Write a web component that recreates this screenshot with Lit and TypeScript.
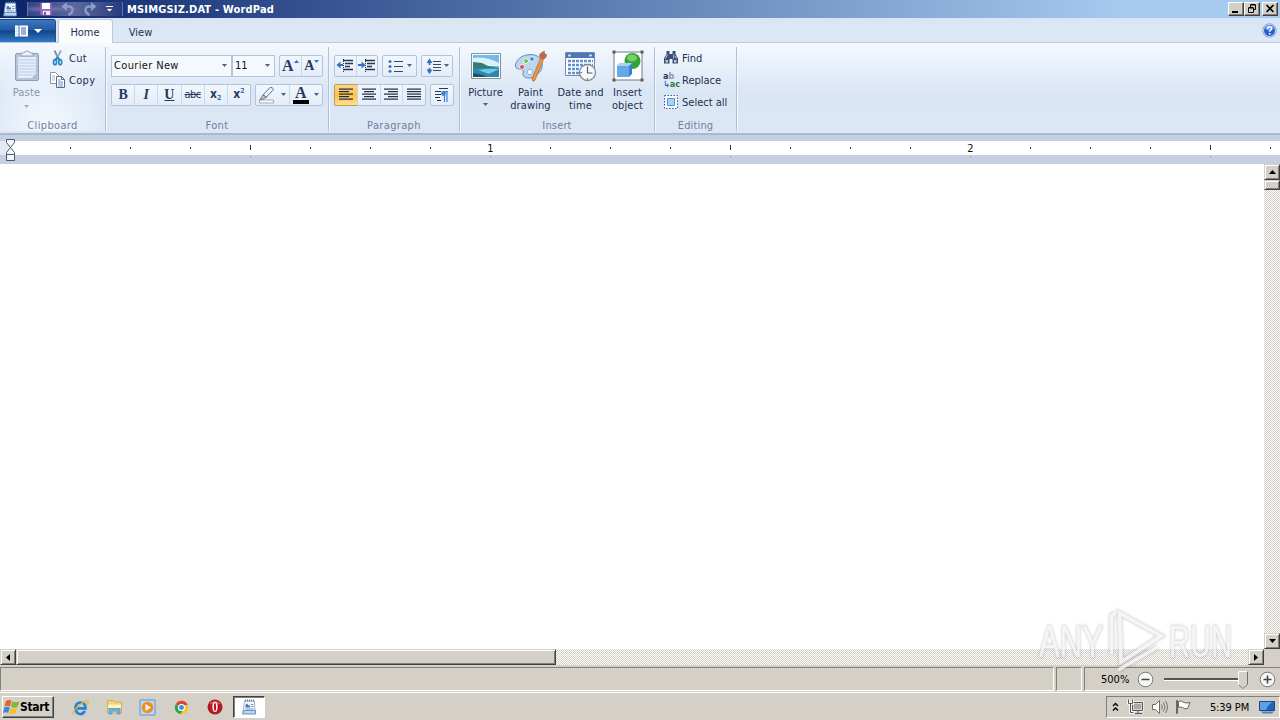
import { LitElement, html, svg, css, nothing } from 'lit'
import type { TemplateResult } from 'lit'
import { customElement, property } from 'lit/decorators.js'
import { map } from 'lit/directives/map.js'
import { classMap } from 'lit/directives/class-map.js'

const appIcon = html`
  <svg width="16" height="16" viewBox="0 0 16 16">
    <path d="M3.500 2h10l.5 11.500H2z" fill="#f2f7fd" stroke="#86a5c9" stroke-width=".8"/>
    <path d="M2.500 11.500h12v3.500H1.500z" fill="#b9d5f1" stroke="#4f7bb0" stroke-width=".8"/>
    <path d="M4.500 .5v2M6.500 .5v2M8.500 .5v2M10.500 .5v2M12.500 .5v2" stroke="#4d6f9c" stroke-width=".9"/>
    <path d="M4.500 8.500V6l1.500-1.500L8 7l1-1.500V8.500z" fill="#3f78bd"/>
    <path d="M10 5.500h2.500M10 7.500h2.500M4.500 10h8" stroke="#6a8db5" stroke-width=".9"/>
  </svg>`

const icons: Record<string, TemplateResult> = {
  save: html`
    <svg width="14" height="14" viewBox="0 0 14 14">
      <path d="M1 1h12v12H2l-1-1z" fill="#9b6fc0" stroke="#6f4fa4"/>
      <path d="M3 1h8v6H3z" fill="#fff"/>
      <path d="M4 9h7v4H4z" fill="#f0e4fa"/>
      <path d="M5 10h2v3H5z" fill="#76549f"/>
    </svg>`,
  undo: html`
    <svg width="14" height="14" viewBox="0 0 14 14">
      <path d="M4 4.500h4q4 .5 3.500 4-.5 3-4 4.500" fill="none" stroke="#8c9ccb" stroke-width="2.400"/>
      <path d="M6 0v9L0.500 4.500z" fill="#8c9ccb"/>
    </svg>`,
  redo: html`
    <svg width="14" height="14" viewBox="0 0 14 14">
      <path d="M10 4.500H6q-4 .5-3.500 4 .5 3 4 4.500" fill="none" stroke="#8c9ccb" stroke-width="2.400"/>
      <path d="M8 0v9l5.500-4.500z" fill="#8c9ccb"/>
    </svg>`,
  menu: html`
    <svg width="28" height="14" viewBox="0 0 28 14">
      <path d="M1 1.500h13v11H1z" fill="#fff"/>
      <path d="M5 1.500v11" stroke="#2f66ae"/>
      <path d="M7 4h5M7 6h5M7 8h5M7 10h5" stroke="#2f66ae"/>
      <path d="M1.500 4h2M1.500 7h2M1.500 10h2" stroke="#a6c0e0"/>
      <path d="M20 5h8l-4 4z" fill="#fff"/>
    </svg>`,
  help: html`
    <svg width="15" height="15" viewBox="0 0 15 15">
      <circle cx="7.500" cy="7.500" r="6.700" fill="#e6eefb" stroke="#6e93d6" stroke-width=".9"/>
      <circle cx="7.500" cy="7.500" r="5.500" fill="#2a5fce"/>
      <ellipse cx="7.500" cy="4.800" rx="4.200" ry="2.600" fill="#6c9bee"/>
      <path d="M5.500 5.900q0-2.200 2.100-2.200t2 1.900q0 1.200-1.300 1.800-.7.500-.7 1.400" fill="none" stroke="#fff" stroke-width="1.500"/>
      <path d="M6.900 10h1.600v1.600H6.900z" fill="#fff"/>
    </svg>`,
  paste: html`
    <svg width="26" height="32" viewBox="0 0 26 32">
      <rect x="1.500" y="3.500" width="23" height="27" rx="1.500" fill="#b5c3dc" stroke="#8c9cbd"/>
      <path d="M4 7h18v21H4z" fill="#e6eef9"/>
      <path d="M4 10h18M4 13h18M4 16h18M4 19h18M4 22h18M4 25h18" stroke="#bccbe3"/>
      <path d="M7 6V3h3q.5-2 3-2t3 2h3v3z" fill="#edf1f8" stroke="#95a3bf"/>
      <path d="M18 28l4-4v4z" fill="#a3b5d2"/>
    </svg>`,
  cut: html`
    <svg width="14" height="16" viewBox="0 0 14 16">
      <path d="M3.500 .5l4.500 9.500" stroke="#7d8fa5" stroke-width="1.800"/>
      <path d="M10 .5L5 10" stroke="#9aabbf" stroke-width="1.800"/>
      <path d="M6.500 7L4.500 10M6.500 7l2 3" stroke="#2387c9" stroke-width="2"/>
      <ellipse cx="4" cy="12.200" rx="1.500" ry="2.500" fill="none" stroke="#2387c9" stroke-width="1.700"/>
      <ellipse cx="9.200" cy="12.200" rx="1.500" ry="2.500" fill="none" stroke="#2387c9" stroke-width="1.700"/>
    </svg>`,
  copy: html`
    <svg width="16" height="16" viewBox="0 0 16 16">
      <path d="M.5.5h5l3 3v8h-8z" fill="#fff" stroke="#8593a8"/>
      <path d="M2 4h3M2 6h3M2 8h3" stroke="#a9bcd8"/>
      <path d="M6.500 4.500h5l3 3v8h-8z" fill="#fff" stroke="#5b6b84"/>
      <path d="M11.500 4.500v3h3" fill="none" stroke="#5b6b84"/>
      <path d="M8 8h2.500M8 10h5M8 12h5M8 14h5" stroke="#6d93c9"/>
    </svg>`,
  highlight: html`
    <svg width="18" height="18" viewBox="0 0 18 18">
      <path d="M1.500 14h14v3h-14z" fill="#fafafa" stroke="#9a9a9a" stroke-width=".8"/>
      <path d="M5 9L12 1.500q3-.5 3.500 2L8.500 11z" fill="#eef3fa" stroke="#5d6f8e"/>
      <path d="M5 9l3.500 2.200-4.500 2.300H2z" fill="#c3cbd8" stroke="#5d6f8e" stroke-width=".9"/>
    </svg>`,
  outdent: html`
    <svg width="18" height="14" viewBox="0 0 18 14">
      <path d="M7 1.500h10M9 4.500h8M9 7.500h5M7 10.500h10" stroke="#28364f" stroke-width="1.500"/>
      <path d="M7.500 0v14" stroke="#28364f" stroke-dasharray="1 1"/>
      <path d="M2 6h5" stroke="#2f72c4" stroke-width="2"/>
      <path d="M4.500 2.500v7L.5 6z" fill="#2f72c4"/>
    </svg>`,
  indent: html`
    <svg width="18" height="14" viewBox="0 0 18 14">
      <path d="M7 1.500h10M9 4.500h8M9 7.500h5M7 10.500h10" stroke="#28364f" stroke-width="1.500"/>
      <path d="M7.500 0v14" stroke="#28364f" stroke-dasharray="1 1"/>
      <path d="M0 6h4" stroke="#2f72c4" stroke-width="2"/>
      <path d="M3.500 2.500v7l4-3.500z" fill="#2f72c4"/>
    </svg>`,
  bullets: html`
    <svg width="16" height="14" viewBox="0 0 16 14">
      <path d="M6 2.500h9M6 7.500h9M6 12.500h9" stroke="#3a4a66"/>
      <circle cx="2" cy="2.500" r="1.500" fill="#3577c4"/><circle cx="2" cy="7.500" r="1.500" fill="#3577c4"/><circle cx="2" cy="12.200" r="1.500" fill="#3577c4"/>
    </svg>`,
  spacing: html`
    <svg width="16" height="16" viewBox="0 0 16 16">
      <path d="M7 3.500h8M7 6.500h8M7 9.500h8M7 12.500h8" stroke="#3a4a66"/>
      <path d="M3.500 2v5M3.500 10v5" stroke="#2f72c4" stroke-width="1.800"/>
      <path d="M.5 5l3-4.500 3 4.500zM.5 11.500l3 4.500 3-4.500z" fill="#2f72c4"/>
    </svg>`,
  paragraph: html`
    <svg width="14" height="14" viewBox="0 0 14 14">
      <path d="M4 .5h9M0 3.500h6M0 6.500h6M0 9.500h5M2 12.500h4" stroke="#28364f"/>
      <path d="M13 3.500H9.500M9.500 3v11M12 3v11" stroke="#3b82d0" stroke-width="1.200"/>
      <circle cx="8.500" cy="5.500" r="2.400" fill="#3b82d0"/>
    </svg>`,
  picture: html`
    <svg width="32" height="32" viewBox="0 0 32 32">
      <path d="M1.500 3.500h29v25h-29z" fill="#fff" stroke="#858f9d"/>
      <path d="M3 5h26v22H3z" fill="#75b9e8"/>
      <path d="M3 8q12-2 26 5v3H3z" fill="#d9f2f8"/>
      <path d="M3 12l9 1 6 3 11 2H3z" fill="#357c74"/>
      <path d="M3 18h26v9H3z" fill="#2e86ae"/>
      <path d="M8 20q12-2 21-1l-10 5z" fill="#74c8df"/>
      <path d="M3 23l9 2 5 2H3z" fill="#1c545c"/>
    </svg>`,
  paint: html`
    <svg width="33" height="32" viewBox="0 0 33 32">
      <path d="M17 4.500q7 0 10.500 6 3 9-5 14.500-7 5-12 2-3-2-1-5 0-3-4-3-5 0-4-5Q5 4.500 17 4.500z" fill="#b9d5f0" stroke="#668fba"/>
      <circle cx="8" cy="17" r="2.500" fill="#d6545d" stroke="#fff" stroke-width=".8"/>
      <circle cx="12" cy="11" r="2.500" fill="#6ec25d" stroke="#fff" stroke-width=".8"/>
      <circle cx="18" cy="9" r="2.300" fill="#4286cd" stroke="#fff" stroke-width=".8"/>
      <circle cx="16" cy="22" r="2.800" fill="#f3f8fd" stroke="#88a4c3" stroke-width=".8"/>
      <path d="M27 7l3 1-9 22q-2 3-3-1z" fill="#ed9644" stroke="#b56c2c" stroke-width=".8"/>
      <path d="M25.500 7.500q-1-4 2-5l3-2 .5 3 2 1q0 4-4 5z" fill="#b76e50"/>
    </svg>`,
  date: html`
    <svg width="33" height="32" viewBox="0 0 33 32">
      <path d="M1.500 2.500h29v23h-29z" fill="#fff" stroke="#7089ad"/>
      <path d="M2 3h28v5H2z" fill="#4d77b4"/>
      <path d="M4 5.500h3M25 5.500h3" stroke="#c7d8ed" stroke-width="2"/>
      <path d="M4 11h25M4 15h25M4 19h25M4 23h25" stroke="#5f92d2" stroke-width="2.600" stroke-dasharray="3 1"/>
      <circle cx="23.500" cy="22.500" r="8" fill="#f7f9fb" stroke="#7f8893" stroke-width="1.300"/>
      <path d="M23.500 16.500v6.500h5" fill="none" stroke="#4f5d6e" stroke-width="1.200"/>
      <path d="M23.500 28v1.500M16.500 22.500H18" stroke="#5b6775"/>
    </svg>`,
  object: html`
    <svg width="32" height="32" viewBox="0 0 32 32">
      <path d="M2 2h28v28H2z" fill="#fff" stroke="#70798a"/>
      <path d="M0.500.5h3v3h-3zM28.500.5h3v3h-3zM.5 28.500h3v3h-3zM28.500 28.500h3v3h-3z" fill="#65594d"/>
      <circle cx="20.500" cy="11" r="8" fill="#33a33a"/>
      <ellipse cx="20" cy="8" rx="5" ry="3.500" fill="#76cf6b"/>
      <path d="M5 16l3-3h12v11l-3 3H5z" fill="#3c7fcc"/>
      <path d="M5 16h12v11H5z" fill="#65a8ea"/>
      <path d="M5 16l3-3h12l-3 3z" fill="#a5d0f7"/>
    </svg>`,
  find: html`
    <svg width="16" height="16" viewBox="0 0 16 16">
      <path d="M3.500 1h3v3h3V1h3v3l2.500 4.500v5H9.500V9h-3v4.500H1v-5L3.500 4z" fill="#3c4e70"/>
      <path d="M4.500 4.500L2.500 8.500M11 4.500l-.5 4M12.500 6l1 2.500" stroke="#b9cbe5"/>
      <path d="M2.500 10h2.500v2.500H2.500zM11 10h2.500v2.500H11z" fill="#b9cbe5"/>
    </svg>`,
  selectAll: html`
    <svg width="16" height="16" viewBox="0 0 16 16">
      <path d="M1.500 1.500h13v13h-13z" fill="#fff" stroke="#2f62ad" stroke-dasharray="1.500 1.500"/>
      <path d="M4.500 4.500h7v7h-7z" fill="#a9d2f7" stroke="#5597da"/>
    </svg>`,
  start: html`
    <svg width="17" height="16" viewBox="0 0 17 16">
      <path d="M3 2q3-2 5.500 0L7 7.500Q4.500 6 1.500 7.500z" fill="#e8602c"/>
      <path d="M9.300 2.500q3 1.500 7 0L14.500 8q-3 1.500-6.500-.2z" fill="#7fb93b"/>
      <path d="M1.200 8.500q3-1.500 5.500 0L5.200 14q-2.500-1.500-5.200 0z" fill="#3f87d6"/>
      <path d="M7.500 9q3 1.500 6.500 0l-1.500 5.500q-3 1.500-6.300-.2z" fill="#f6c02d"/>
    </svg>`,
  ie: html`
    <svg width="17" height="17" viewBox="0 0 17 17">
      <path d="M13 12q-2 3.300-5 3-4.500-.8-4.500-6t5-5.500q5 .2 5 5.800H5" fill="none" stroke="#2583d4" stroke-width="2.700"/>
      <path d="M2 15.500Q-1 14 6 7.500 14 .5 16 2q1 1-1.500 4" fill="none" stroke="#e4b83b" stroke-width="1.300"/>
    </svg>`,
  folder: html`
    <svg width="17" height="16" viewBox="0 0 17 16">
      <path d="M1.500 3V1.500h6L9 3h6.500v11h-14z" fill="#f1d477" stroke="#c7a64d" stroke-width=".8"/>
      <path d="M2 5.500h13V9H2z" fill="#fff4bb"/>
      <path d="M3 15V9.500h11V15h-3v-3H6v3z" fill="#67b5e5" stroke="#4790c2" stroke-width=".7"/>
    </svg>`,
  player: html`
    <svg width="17" height="17" viewBox="0 0 17 17">
      <path d="M1 1h15v15H1z" fill="#b5daf6" stroke="#5b98cf"/>
      <circle cx="8.500" cy="8.500" r="5.800" fill="#f28a1d"/>
      <path d="M6.500 5v7l5.500-3.500z" fill="#fff"/>
    </svg>`,
  chrome: html`
    <svg width="15" height="15" viewBox="0 0 15 15">
      <circle cx="7.500" cy="7.500" r="6.700" fill="#f3c72d"/>
      <path d="M7.500 7.500L1.700 4.200A6.700 6.700 0 0 1 13.800 5H7.500z" fill="#dc4437"/>
      <path d="M1.700 4.200A6.700 6.700 0 0 0 6.500 14.100L9.500 9z" fill="#2fa454"/>
      <circle cx="7.500" cy="7.500" r="3" fill="#4287e8" stroke="#fff" stroke-width="1.100"/>
    </svg>`,
  opera: html`
    <svg width="16" height="16" viewBox="0 0 16 16">
      <circle cx="8" cy="8" r="7.500" fill="#b51820"/>
      <path d="M2.500 4.500Q8-1 13.500 4.500 8 7 2.500 4.500z" fill="#df5556"/>
      <ellipse cx="8" cy="8" rx="2.600" ry="5" fill="#fff"/>
      <ellipse cx="8" cy="8" rx="1.100" ry="4" fill="#b51820"/>
    </svg>`,
  network: html`
    <svg width="17" height="16" viewBox="0 0 17 16">
      <path d="M5.500 3.500h10v8h-10z" fill="#a9a9a6" stroke="#fff" stroke-width="2"/>
      <path d="M5.500 3.500h10v8h-10zM8 14.500h7M11 12v2" fill="none" stroke="#55575a"/>
      <path d="M1.500.5v4h4v-4M3.500 4.500v9h4" fill="none" stroke="#fff" stroke-width="2.400"/>
      <path d="M1.500.5v4h4v-4M3.500 4.500v9h3" fill="none" stroke="#55575a"/>
    </svg>`,
  sound: html`
    <svg width="17" height="16" viewBox="0 0 17 16">
      <path d="M1.500 5.500h3l4-4v13l-4-4h-3z" fill="#fff" stroke="#6c6c6a"/>
      <path d="M10.500 5.500q1.500 2.500 0 5M12.500 3.500q3 4.500 0 9M14.500 2q4 6 0 12" fill="none" stroke="#777774"/>
    </svg>`,
  flag: html`
    <svg width="17" height="16" viewBox="0 0 17 16">
      <path d="M1.500 1.500h1v13h-1z" fill="#fff" stroke="#666"/>
      <path d="M3.500 2.500q3-1.500 5.500 1 2 1 6 0l-2.500 6q-3 1-5-1-2-1-4 0z" fill="#fff" stroke="#666"/>
    </svg>`,
  desktop: html`
    <svg width="16" height="14" viewBox="0 0 16 14">
      <path d="M.5 1.500h15v9H.5z" fill="#1f63ba" stroke="#194a8d"/>
      <path d="M1 2h13Q9 4 7 10H1z" fill="#5aa2e4"/>
      <path d="M2 11.500h13l-2 2H4z" fill="#4e7fb8"/>
    </svg>`,
}

const caret = (color = '#53617a') => html`
  <svg width="5" height="3" viewBox="0 0 5 3"><path d="M0 0h5L2.500 3z" fill=${color}/></svg>`

// Bar lengths of each alignment icon, as [x, width] per line.
const alignments: [number, number][][] = [
  [[0, 14], [0, 10], [0, 14], [0, 10], [0, 14]],
  [[0, 14], [2, 10], [0, 14], [2, 10], [0, 14]],
  [[0, 14], [4, 10], [0, 14], [4, 10], [0, 14]],
  [[0, 14], [0, 14], [0, 14], [0, 14], [0, 14]],
]

const alignIcon = (lines: [number, number][]) => html`
  <svg width="14" height="13" viewBox="0 0 14 13">
    ${lines.map(([x, w], i) => svg`<rect x=${x} y=${i * 2.5 + 0.5} width=${w} height="1.200" fill="#1f2c44"/>`)}
  </svg>`

const ARROWS: Record<string, string> = {
  up: 'M0 4h7L3.500 0z',
  down: 'M0 0h7L3.500 4z',
  left: 'M4 0v7L0 3.500z',
  right: 'M0 0v7l4-3.500z',
}

/** Classic grey scrollbar, with arrow buttons at both ends. */
@customElement('wp-scrollbar')
export class WpScrollbar extends LitElement {
  static styles = css`
    :host {
      display: flex;
      background: repeating-conic-gradient(#fff 0 25%, #d4d0c8 0 50%) 0 0 / 2px 2px;
    }
    :host([vertical]) {
      flex-direction: column;
    }
    .btn, .thumb {
      box-sizing: border-box;
      background: #d4d0c8;
      border: 1px solid;
      border-color: #d4d0c8 #404040 #404040 #d4d0c8;
      box-shadow: inset 1px 1px #fff, inset -1px -1px #808080;
    }
    .btn {
      width: 16px;
      height: 16px;
      flex: none;
      display: flex;
      align-items: center;
      justify-content: center;
    }
    .track {
      flex: 1;
    }
    .thumb {
      width: var(--thumb-size);
      height: 100%;
    }
    :host([vertical]) .thumb {
      width: 100%;
      height: var(--thumb-size);
    }
  `

  @property({ type: Boolean, reflect: true }) vertical = false

  private _arrow(dir: string) {
    const size = this.vertical ? [7, 4] : [4, 7]
    return html`<div class="btn">
      <svg width=${size[0]} height=${size[1]}><path d=${ARROWS[dir]} fill="#000"/></svg>
    </div>`
  }

  render() {
    return html`
      ${this._arrow(this.vertical ? 'up' : 'left')}
      <div class="track"><div class="thumb"></div></div>
      ${this._arrow(this.vertical ? 'down' : 'right')}
    `
  }
}

/** Horizontal ruler, 480px to the inch, marked every eighth. */
@customElement('wp-ruler')
export class WpRuler extends LitElement {
  static styles = css`
    :host {
      display: block;
      height: 29px;
      background: #c5cfdf;
    }
    svg {
      display: block;
    }
    text {
      font: 11px 'DejaVu Sans Condensed', 'DejaVu Sans', sans-serif;
      text-anchor: middle;
      fill: #111;
    }
  `

  private _mark(i: number) {
    const x = 10 + i * 60
    if (i % 8 === 0) {
      return svg`<text x=${x + 0.5} y="17">${i / 8}</text><rect x=${x} y="21" width="1" height="2" fill="#a3adc0"/>`
    }
    if (i % 4 === 0) {
      return svg`<rect x=${x} y="10" width="1" height="5" fill="#333"/><rect x=${x} y="21" width="1" height="2" fill="#a3adc0"/>`
    }
    return svg`<rect x=${x} y="12" width="1" height="2" fill="#333"/>`
  }

  render() {
    const eighths = Array.from({ length: 21 }, (_, i) => i + 1)
    return html`
      <svg width="1280" height="29">
        <rect x="0" y="6" width="10" height="14" fill="#e4eaf4"/>
        <rect x="10" y="6" width="1270" height="14" fill="#fff"/>
        ${map(eighths, (i) => this._mark(i))}
        <g fill="#f3f6fa" stroke="#4b5a70">
          <path d="M6.500 4.500h8v3l-4 5-4-5z"/>
          <path d="M10.500 12.500l4 5v2h-8v-2z"/>
          <path d="M6.500 19.500h8v6h-8z"/>
        </g>
      </svg>
    `
  }
}

@customElement('app-root')
export class AppRoot extends LitElement {
  static styles = css`
    :host {
      position: relative;
      display: flex;
      flex-direction: column;
      width: 1280px;
      height: 720px;
      overflow: hidden;
      background: #fff;
      color: #1e2f52;
      font: 11px/13px 'DejaVu Sans Condensed', 'DejaVu Sans', sans-serif;
      white-space: nowrap;
    }
    svg {
      display: block;
      flex: none;
    }

    .titlebar {
      display: flex;
      align-items: center;
      height: 18px;
      padding-left: 2px;
      background: linear-gradient(90deg, #0a246a, #a6caf0 88%);
      color: #fff;
    }
    .quick {
      display: flex;
      align-items: center;
      gap: 8px;
      height: 14px;
      margin-left: 9px;
      padding: 0 8px 0 11px;
      border-left: 1px solid #6473a4;
      border-right: 1px solid #6473a4;
      background: radial-gradient(ellipse at 20% 50%, #7a72b4, transparent 35%), linear-gradient(90deg, #324584, #5d689d 50%, #263c80);
      box-sizing: border-box;
      width: 96px;
    }
    .title {
      flex: 1;
      margin-left: 4px;
      font-weight: bold;
      letter-spacing: 0.18px;
      padding-top: 2px;
    }
    .window-buttons {
      display: flex;
      padding-right: 2px;
    }
    .window-buttons div {
      box-sizing: border-box;
      width: 16px;
      height: 14px;
      display: flex;
      align-items: center;
      justify-content: center;
      background: #d4d0c8;
      border: 1px solid;
      border-color: #fff #404040 #404040 #fff;
      box-shadow: inset -1px -1px #808080;
    }
    .window-buttons div:last-child {
      margin-left: 2px;
    }

    .tabs {
      display: flex;
      align-items: flex-end;
      height: 25px;
      background: linear-gradient(#d9e5f4, #e0e9f5);
      box-shadow: inset 0 -1px #b9c9e0;
    }
    .file {
      display: flex;
      align-items: center;
      justify-content: center;
      width: 56px;
      height: 23px;
      background: linear-gradient(#3b78c0, #2359a5 45%, #144488 50%, #2f7bc8);
      border-top: 1px solid #16407e;
      border-right: 1px solid #244f8d;
      border-radius: 0 3px 0 0;
      box-sizing: border-box;
      margin-bottom: 1px;
    }
    .tab {
      box-sizing: border-box;
      height: 24px;
      padding-top: 7px;
      text-align: center;
      width: 55px;
    }
    .tab.active {
      margin-left: 2px;
      padding-right: 1px;
      background: #fbfcfe;
      border: 1px solid #b9c9e0;
      border-bottom: none;
      border-radius: 3px 3px 0 0;
      padding-top: 6px;
    }
    .help {
      margin-left: auto;
      padding: 0 3px 5px 0;
    }

    .ribbon {
      display: flex;
      box-sizing: border-box;
      height: 92px;
      background: linear-gradient(#f5f9fe, #e6eef9 30%, #dbe6f4 55%, #dce7f5);
      border-bottom: 2px solid #a8bad3;
    }
    .group {
      box-sizing: border-box;
      display: flex;
      flex-direction: column;
      justify-content: space-between;
      height: 84px;
      margin-top: 4px;
      border-right: 1px solid #afc0d9;
      box-shadow: 1px 0 #f4f8fd;
    }
    .group-name {
      text-align: center;
      color: #71819c;
      letter-spacing: 0.35px;
      line-height: 11px;
    }
    .insert .group-name, .editing .group-name {
      letter-spacing: 0.15px;
    }
    .clipboard { width: 106px; background: radial-gradient(ellipse at 45% 100%, #f4f8fe, transparent 80%); }
    .font { width: 223px; }
    .para { width: 131px; }
    .insert { width: 195px; }
    .editing { width: 82px; }

    .clip-body {
      display: flex;
      padding: 3px 0 0 12px;
    }
    .paste {
      width: 29px;
      display: flex;
      flex-direction: column;
      align-items: center;
      color: #8b95a8;
    }
    .paste span {
      padding: 4px 0 6px;
      letter-spacing: 0.2px;
    }
    .small-list {
      display: flex;
      flex-direction: column;
      gap: 6px;
      padding-left: 9px;
    }
    .small-item {
      display: flex;
      align-items: center;
      gap: 3px;
      height: 16px;
    }
    .small-item .label {
      padding-top: 1px;
    }
    .clip-body .small-item {
      letter-spacing: 0.3px;
    }
    .small-item .slot {
      width: 16px;
      display: flex;
      justify-content: center;
    }
    .editing .small-list {
      padding: 3px 0 0 8px;
    }

    .rows {
      display: flex;
      flex-direction: column;
      gap: 7px;
      padding: 8px 0 0 5px;
    }
    .row {
      display: flex;
      gap: 4px;
    }
    .set {
      display: flex;
      box-sizing: border-box;
      height: 22px;
      border: 1px solid #b3c3db;
      border-radius: 2px;
      background: linear-gradient(#f1f6fc, #e4edf8);
    }
    .cell {
      flex: 1;
      display: flex;
      align-items: center;
      justify-content: center;
      gap: 5px;
    }
    .cell + .cell {
      border-left: 1px solid #cbd8ea;
    }
    .cell.on {
      margin: -1px;
      background: linear-gradient(#fbd785, #fcc247 50%, #fde08d);
      border: 1px solid #bd9a5a;
      border-radius: 2px;
    }
    .combos {
      display: flex;
    }
    .combo {
      box-sizing: border-box;
      display: flex;
      align-items: center;
      justify-content: space-between;
      height: 22px;
      padding: 0 4px 0 2px;
      border: 1px solid #b3c3db;
      background: #f5f9fe;
      color: #111;
    }
    .combo.name { width: 121px; letter-spacing: 0.35px; }
    .combo.size { width: 43px; }
    .w-grow { width: 44px; }
    .w-style { width: 140px; }
    .w-colour { width: 68px; }
    .w-indent { width: 44px; }
    .w-bullets { width: 35px; }
    .w-spacing { width: 32px; }
    .w-align { width: 92px; }
    .w-mark { width: 24px; }
    .w-bullets .cell, .w-spacing .cell { gap: 3px; }
    .w-spacing .cell { gap: 2px; }

    .glyph {
      font: bold 14px/14px 'Liberation Serif', serif;
      color: #26395e;
    }
    .glyph.big { font-size: 16px; }
    .glyph.italic { font-style: italic; }
    .glyph.under { text-decoration: underline; }
    .glyph.strike {
      font: 11px/13px 'DejaVu Sans Condensed', sans-serif;
      text-decoration: line-through;
      letter-spacing: -0.5px;
    }
    .glyph.script {
      font: bold 12px/13px 'DejaVu Sans Condensed', sans-serif;
    }
    .glyph sup { font-size: 7px; line-height: 1px; color: #2f72c4; vertical-align: 5px; }
    .glyph sub { font-size: 7px; line-height: 1px; color: #2f72c4; vertical-align: -2px; }
    .sized {
      display: flex;
    }
    .sized svg {
      margin-top: 1px;
    }
    .colour {
      display: flex;
      flex-direction: column;
      align-items: center;
      border-bottom: 4px solid #000;
      width: 16px;
    }

    .big-items {
      display: flex;
      padding: 3px 0 0 3px;
    }
    .big-item {
      display: flex;
      flex-direction: column;
      align-items: center;
      text-align: center;
      letter-spacing: 0.1px;
    }
    .big-item span {
      padding: 4px 0 0;
    }
    .big-item > svg + span + svg {
      margin-top: 4px;
    }

    .replace {
      font: bold 9px/8px 'DejaVu Sans Condensed', sans-serif;
      color: #26395e;
      display: block;
      width: 16px;
    }
    .replace i { font-style: normal; color: #8b97aa; }
    .replace b { color: #2f72c4; }
    .replace em { font-style: normal; color: #2c7b40; }

    .workspace {
      display: grid;
      grid-template-columns: 1fr 16px;
      grid-template-rows: 1fr 16px;
      height: 502px;
      background: #d4d0c8;
    }
    .page {
      background: #fff;
    }
    .v-scroll { --thumb-size: 10px; }
    .h-scroll { --thumb-size: 540px; }

    .status {
      display: flex;
      gap: 2px;
      height: 24px;
      padding: 2px 0 1px;
      background: #d4d0c8;
      color: #000;
    }
    .panel {
      box-sizing: border-box;
      border: 1px solid;
      border-color: #808080 #fff #fff #808080;
    }
    .panel.message { width: 1054px; }
    .panel.mode { width: 26px; }
    .panel.zoom {
      flex: 1;
      display: flex;
      align-items: center;
      padding-left: 16px;
      border-right: none;
    }
    .zoom svg {
      margin-left: 8px;
    }

    .taskbar {
      display: flex;
      align-items: center;
      box-sizing: border-box;
      height: 28px;
      padding: 1px 0 0 2px;
      background: #d4d0c8;
      border-top: 1px solid #fff;
      color: #000;
    }
    .start {
      display: flex;
      align-items: center;
      box-sizing: border-box;
      width: 52px;
      height: 22px;
      border: 1px solid;
      border-color: #fff #404040 #404040 #fff;
      box-shadow: inset -1px -1px #808080;
      font-weight: bold;
      font-size: 12px;
      letter-spacing: -0.3px;
    }
    .launch {
      display: flex;
      align-items: center;
      padding-left: 10px;
    }
    .launch div {
      width: 33.500px;
      display: flex;
      justify-content: center;
    }
    .task {
      box-sizing: border-box;
      width: 32px;
      height: 22px;
      margin-left: 1px;
      display: flex;
      align-items: center;
      justify-content: center;
      background: #fff;
      border: 1px solid;
      border-color: #404040 #fff #fff #404040;
      box-shadow: inset 1px 1px #808080;
    }
    .tray {
      box-sizing: border-box;
      display: flex;
      align-items: center;
      width: 174px;
      height: 22px;
      margin-left: auto;
      padding-left: 5px;
      border: 1px solid;
      border-color: #808080 #fff #fff #808080;
    }
    .tray > svg { margin-right: 7px; }
    .clock {
      flex: 1;
      text-align: center;
      letter-spacing: -0.1px;
      padding-left: 1px;
    }
    .tray > svg:last-child { margin-right: 4px; }

    .watermark {
      position: absolute;
      left: 1030px;
      top: 604px;
    }
    .watermark text {
      font: 45px 'Liberation Sans Narrow', 'Liberation Sans', sans-serif;
    }
  `

  private _item(icon: TemplateResult, label: string) {
    return html`<div class="small-item"><div class="slot">${icon}</div><div class="label">${label}</div></div>`
  }

  private _big(icon: TemplateResult, lines: string[], width: number, menu = false) {
    return html`
      <div class="big-item" style="width:${width}px">
        ${icon}
        <span>${lines[0]}${lines[1] ? html`<br>${lines[1]}` : nothing}</span>
        ${menu ? caret() : nothing}
      </div>`
  }

  private _clipboard() {
    return html`
      <div class="group clipboard">
        <div class="clip-body">
          <div class="paste">${icons.paste}<span>Paste</span>${caret('#a5adbb')}</div>
          <div class="small-list">
            ${this._item(icons.cut, 'Cut')}
            ${this._item(icons.copy, 'Copy')}
          </div>
        </div>
        <div class="group-name">Clipboard</div>
      </div>`
  }

  private _font() {
    return html`
      <div class="group font">
        <div class="rows">
          <div class="row">
            <div class="combos">
              <div class="combo name">Courier New ${caret()}</div>
              <div class="combo size">11 ${caret()}</div>
            </div>
            <div class="set w-grow">
              <div class="cell"><div class="sized"><span class="glyph big">A</span>
                <svg width="5" height="3"><path d="M0 3h5L2.500 0z" fill="#2f72c4"/></svg></div></div>
              <div class="cell"><div class="sized"><span class="glyph">A</span>${caret('#2f72c4')}</div></div>
            </div>
          </div>
          <div class="row">
            <div class="set w-style">
              <div class="cell"><span class="glyph">B</span></div>
              <div class="cell"><span class="glyph italic">I</span></div>
              <div class="cell"><span class="glyph under">U</span></div>
              <div class="cell"><span class="glyph strike">abc</span></div>
              <div class="cell"><span class="glyph script">x<sub>2</sub></span></div>
              <div class="cell"><span class="glyph script">x<sup>2</sup></span></div>
            </div>
            <div class="set w-colour">
              <div class="cell">${icons.highlight}${caret()}</div>
              <div class="cell"><div class="colour"><span class="glyph big">A</span></div>${caret()}</div>
            </div>
          </div>
        </div>
        <div class="group-name">Font</div>
      </div>`
  }

  private _paragraph() {
    return html`
      <div class="group para">
        <div class="rows">
          <div class="row">
            <div class="set w-indent">
              <div class="cell">${icons.outdent}</div>
              <div class="cell">${icons.indent}</div>
            </div>
            <div class="set w-bullets"><div class="cell">${icons.bullets}${caret()}</div></div>
            <div class="set w-spacing"><div class="cell">${icons.spacing}${caret()}</div></div>
          </div>
          <div class="row">
            <div class="set w-align">
              ${map(alignments, (a, i) => html`<div class=${classMap({ cell: true, on: i === 0 })}>${alignIcon(a)}</div>`)}
            </div>
            <div class="set w-mark"><div class="cell">${icons.paragraph}</div></div>
          </div>
        </div>
        <div class="group-name">Paragraph</div>
      </div>`
  }

  private _insert() {
    return html`
      <div class="group insert">
        <div class="big-items">
          ${this._big(icons.picture, ['Picture'], 45, true)}
          ${this._big(icons.paint, ['Paint', 'drawing'], 45)}
          ${this._big(icons.date, ['Date and', 'time'], 55)}
          ${this._big(icons.object, ['Insert', 'object'], 39)}
        </div>
        <div class="group-name">Insert</div>
      </div>`
  }

  private _editing() {
    const replaceIcon = html`<span class="replace">a<i>b</i><br><b>↳</b><em>ac</em></span>`
    return html`
      <div class="group editing">
        <div class="small-list">
          ${this._item(icons.find, 'Find')}
          ${this._item(replaceIcon, 'Replace')}
          ${this._item(icons.selectAll, 'Select all')}
        </div>
        <div class="group-name">Editing</div>
      </div>`
  }

  private _titlebar() {
    return html`
      <div class="titlebar">
        ${appIcon}
        <div class="quick">
          ${icons.save}${icons.undo}${icons.redo}
          <svg width="9" height="7"><path d="M1 1.500h7" stroke="#fff"/><path d="M1 3.500h7L4.500 7z" fill="#fff" stroke="#111" stroke-width=".5"/></svg>
        </div>
        <div class="title">MSIMGSIZ.DAT - WordPad</div>
        <div class="window-buttons">
          <div><svg width="10" height="9"><path d="M1 7h6v2H1z"/></svg></div>
          <div><svg width="10" height="9"><path d="M3.500 1h5v4.500H7M1.500 4h5v4.500h-5zM3.500 .5h5M1.500 3.500h5M3.500 1v2" fill="none" stroke="#000"/></svg></div>
          <div><svg width="10" height="9"><path d="M1.500 1l7 7M8.500 1l-7 7" stroke="#000" stroke-width="1.600"/></svg></div>
        </div>
      </div>`
  }

  private _status() {
    return html`
      <div class="status">
        <div class="panel message"></div>
        <div class="panel mode"></div>
        <div class="panel zoom">
          500%
          <svg width="142" height="20" viewBox="0 0 142 20">
            <g fill="#f7f7f6" stroke="#777">
              <circle cx="8.500" cy="10.500" r="7.300"/><circle cx="130.500" cy="10.500" r="7.300"/>
            </g>
            <path d="M4.500 10.500h8M126.500 10.500h8M130.500 6.500v8" stroke="#444" stroke-width="1.600"/>
            <path d="M27 10h80" stroke="#555" stroke-width="2"/>
            <path d="M27 11.500h80" stroke="#fff"/>
            <path d="M101.500 2.500h9v13l-4.500 4-4.500-4z" fill="#d4d0c8" stroke="#fff"/>
            <path d="M110.500 2.500v13l-4.500 4-4-3.500" fill="none" stroke="#707070"/>
          </svg>
        </div>
      </div>`
  }

  private _taskbar() {
    return html`
      <div class="taskbar">
        <div class="start">${icons.start}Start</div>
        <div class="launch">
          ${map(['ie', 'folder', 'player', 'chrome', 'opera'], (name) => html`<div>${icons[name]}</div>`)}
        </div>
        <div class="task">${appIcon}</div>
        <div class="tray">
          <svg width="8" height="10"><path d="M1 4l2.500-2.500L6 4M1 8.500L3.500 6 6 8.500" fill="none" stroke="#000" stroke-width="1.400"/></svg>
          ${icons.network}${icons.sound}${icons.flag}
          <div class="clock">5:39 PM</div>
          ${icons.desktop}
        </div>
      </div>`
  }

  // White lettering over the lower right corner, seen by its soft grey edge.
  private _watermark() {
    const shapes = svg`
      <path d="M81.500 50V12l4-3"/>
      <path d="M89.500 9L131 32 91 58z"/>
      <path d="M88 66l40-23"/>`
    const words = svg`
      <text x="9" y="53" textLength="64" lengthAdjust="spacingAndGlyphs">ANY</text>
      <text x="139" y="53" textLength="63" lengthAdjust="spacingAndGlyphs">RUN</text>`
    return html`
      <svg class="watermark" width="220" height="78" viewBox="0 0 220 78">
        <defs>
          <filter id="soft" x="-10%" y="-10%" width="120%" height="120%"><feGaussianBlur stdDeviation="1.300"/></filter>
        </defs>
        <g filter="url(#soft)" opacity=".24">
          <g fill="none" stroke="#666" stroke-width="6">${shapes}</g>
          <g fill="#666" stroke="#666" stroke-width="2.500">${words}</g>
        </g>
        <g opacity=".75">
          <g fill="none" stroke="#fff" stroke-width="3.500">${shapes}</g>
          <g fill="#fff">${words}</g>
        </g>
      </svg>`
  }

  render() {
    return html`
      ${this._titlebar()}
      <div class="tabs">
        <div class="file">${icons.menu}</div>
        <div class="tab active">Home</div>
        <div class="tab">View</div>
        <div class="help">${icons.help}</div>
      </div>
      <div class="ribbon">
        ${this._clipboard()}${this._font()}${this._paragraph()}${this._insert()}${this._editing()}
      </div>
      <wp-ruler></wp-ruler>
      <div class="workspace">
        <div class="page"></div>
        <wp-scrollbar class="v-scroll" vertical></wp-scrollbar>
        <wp-scrollbar class="h-scroll"></wp-scrollbar>
      </div>
      ${this._status()}
      ${this._taskbar()}
      ${this._watermark()}
    `
  }
}
